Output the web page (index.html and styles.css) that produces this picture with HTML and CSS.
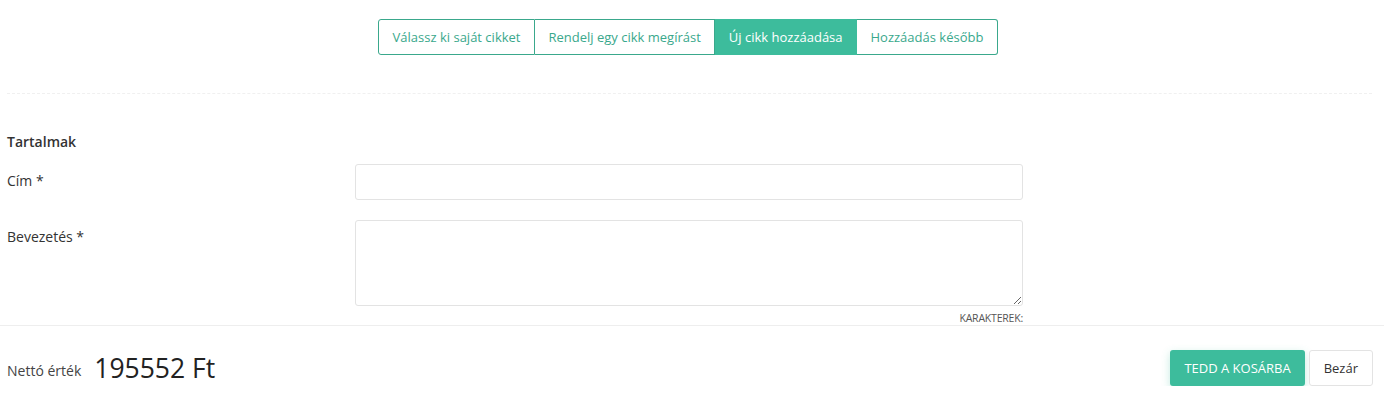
FILE: index.html
```html
<!DOCTYPE html>
<html lang="hu">
<head>
    <meta charset="UTF-8">
    <meta name="viewport" content="width=device-width, initial-scale=1.0">
    <title>Új cikk hozzáadása</title>
    <link rel="stylesheet" href="styles.css">
</head>
<body>
    <div class="modal-body">
        <!-- Fülek -->
        <div class="tabs">
            <button class="tab">Válassz ki saját cikket</button>
            <button class="tab">Rendelj egy cikk megírást</button>
            <button class="tab active">Új cikk hozzáadása</button>
            <button class="tab">Hozzáadás később</button>
        </div>

        <hr class="separator">

        <!-- Tartalom űrlap -->
        <form class="article-form">
            <h4 class="section-title">Tartalmak</h4>
            <div class="form-row">
                <label for="title">Cím *</label>
                <input type="text" id="title">
            </div>
            <div class="form-row">
                <label for="lead">Bevezetés *</label>
                <div class="field">
                    <textarea id="lead"></textarea>
                    <span class="counter">KARAKTEREK:</span>
                </div>
            </div>
        </form>
    </div>

    <!-- Lábléc -->
    <div class="modal-footer">
        <div class="price">
            <span class="price-label">Nettó érték</span>
            <span class="price-value">195552 Ft</span>
        </div>
        <div class="actions">
            <button class="btn-primary">TEDD A KOSÁRBA</button>
            <button class="btn-default">Bezár</button>
        </div>
    </div>
</body>
</html>
```

FILE: styles.css
```css
body {
    font-family: "Open Sans", Arial, sans-serif;
    font-size: 14px;
    color: #333;
    background-color: #fff;
    margin: 0;
}

.modal-body {
    padding: 19px 12px 0 7px;
}

/* Fülek */
.tabs {
    display: flex;
    justify-content: center;
    margin-left: -3px;
}

.tab {
    font-family: inherit;
    font-size: 13px;
    height: 36px;
    padding: 0 13.5px;
    background-color: #fff;
    color: #3aa88c;
    border: 1px solid #3aa88c;
    border-left: none;
    cursor: pointer;
}

.tab:first-child {
    border-left: 1px solid #3aa88c;
    border-radius: 3px 0 0 3px;
}

.tab:last-child {
    border-radius: 0 3px 3px 0;
}

.tab.active {
    background-color: #3dbc9c;
    border-color: #3dbc9c;
    color: #fff;
}

.separator {
    border: none;
    border-top: 1px dashed #f0f0f0;
    margin: 38px 0 0;
}

/* Űrlap */
.section-title {
    font-size: 14px;
    font-weight: 600;
    margin: 38px 0 13px;
}

.form-row {
    display: flex;
    margin-bottom: 20px;
}

.form-row label {
    width: 348px;
    flex-shrink: 0;
    padding-top: 7px;
}

.form-row input,
.form-row textarea {
    width: 668px;
    box-sizing: border-box;
    border: 1px solid #e3e3e3;
    border-radius: 3px;
    font-family: inherit;
    font-size: 14px;
    padding: 6px 10px;
    margin: 0;
}

.form-row input {
    height: 36px;
}

.form-row textarea {
    display: block;
    height: 86px;
}

.field {
    display: flex;
    flex-direction: column;
    align-items: flex-end;
    width: 668px;
}

.counter {
    font-size: 10.5px;
    color: #555;
    line-height: 14px;
    margin-top: 5px;
    letter-spacing: -0.2px;
}

.form-row:last-child {
    margin-bottom: 0;
}

/* Lábléc */
.modal-footer {
    display: flex;
    justify-content: space-between;
    align-items: center;
    border-top: 1px solid #eeeeee;
    padding: 24px 11px 0 7px;
}

.price {
    display: flex;
    align-items: center;
    gap: 13px;
}

.price-label {
    color: #444;
    margin-top: 4px;
}

.price-value {
    font-size: 26.5px;
    font-weight: 500;
    color: #222;
}

.actions {
    display: flex;
    gap: 4px;
}

.btn-primary,
.btn-default {
    font-family: inherit;
    font-size: 13px;
    height: 36px;
    border-radius: 3px;
    cursor: pointer;
}

.btn-primary {
    background-color: #3dbc9c;
    color: #fff;
    border: none;
    padding: 0 14px;
    box-shadow: 0 3px 8px rgba(61, 188, 156, 0.3);
}

.btn-default {
    background-color: #fff;
    color: #333;
    border: 1px solid #e3e3e3;
    padding: 0 14px;
}
```
